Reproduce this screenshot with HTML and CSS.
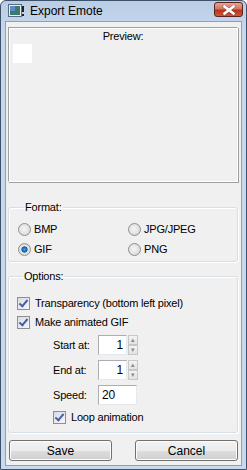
FILE: index.html
```html
<!DOCTYPE html>
<html lang="en">
<head>
    <meta charset="UTF-8">
    <title>Export Emote</title>
    <link rel="stylesheet" href="styles.css">
</head>
<body>
    <div class="window">
        <!-- Title bar -->
        <div class="titlebar">
            <svg class="app-icon" width="16" height="16" viewBox="0 0 16 16">
                <rect x="0.5" y="1.5" width="13" height="12" fill="#e8eef4" stroke="#5a6b80"/>
                <rect x="2" y="3" width="10" height="9" fill="#3d7a6e"/>
                <rect x="2" y="3" width="5" height="5" fill="#5b8fc4"/>
                <rect x="14" y="3" width="2" height="6" fill="#222"/>
                <rect x="14" y="11" width="2" height="2" fill="#222"/>
            </svg>
            <span class="title">Export Emote</span>
            <div class="close-btn">
                <svg width="14" height="10" viewBox="0 0 14 10">
                    <path d="M2.5 1.5 L11.5 8.5 M11.5 1.5 L2.5 8.5" stroke="#4a2a2a" stroke-width="4" stroke-linecap="square" opacity="0.35"/>
                    <path d="M2.5 1.5 L11.5 8.5 M11.5 1.5 L2.5 8.5" stroke="#fff" stroke-width="2.6" stroke-linecap="square"/>
                </svg>
            </div>
        </div>

        <div class="client">
            <div class="preview-box">
                <div class="preview-label">Preview:</div>
                <div class="preview-image"></div>
            </div>

            <fieldset class="group format-group">
                <legend>Format:</legend>
                <div class="radio-grid">
                    <label class="radio"><span class="radio-dot"></span>BMP</label>
                    <label class="radio"><span class="radio-dot"></span>JPG/JPEG</label>
                    <label class="radio"><span class="radio-dot checked"></span>GIF</label>
                    <label class="radio"><span class="radio-dot"></span>PNG</label>
                </div>
            </fieldset>

            <fieldset class="group options-group">
                <legend>Options:</legend>
                <label class="check"><span class="check-box"></span>Transparency (bottom left pixel)</label>
                <label class="check"><span class="check-box"></span>Make animated GIF</label>

                <div class="anim-options">
                    <div class="field-row">
                        <span class="field-label">Start at:</span>
                        <div class="text-input">1</div>
                        <div class="spin">
                            <span class="spin-btn">&#9652;</span>
                            <span class="spin-btn">&#9662;</span>
                        </div>
                    </div>
                    <div class="field-row">
                        <span class="field-label">End at:</span>
                        <div class="text-input">1</div>
                        <div class="spin">
                            <span class="spin-btn">&#9652;</span>
                            <span class="spin-btn">&#9662;</span>
                        </div>
                    </div>
                    <div class="field-row">
                        <span class="field-label">Speed:</span>
                        <div class="text-input speed">20</div>
                    </div>
                    <label class="check loop"><span class="check-box"></span>Loop animation</label>
                </div>
            </fieldset>

            <div class="button-row">
                <button class="btn">Save</button>
                <button class="btn">Cancel</button>
            </div>
        </div>
    </div>
</body>
</html>
```

FILE: styles.css
```css
body {
    margin: 0;
    padding: 0;
    font-family: "Liberation Sans", Arial, sans-serif;
    font-size: 11px;
    letter-spacing: -0.2px;
    color: #000;
    background: #fff;
}

.window {
    width: 247px;
    height: 470px;
    box-sizing: border-box;
    border: 1px solid #3f5269;
    border-radius: 6px 6px 0 0;
    background: linear-gradient(to bottom, #b9cde5, #c5d8ee 30px, #c7d9ee);
    display: flex;
    flex-direction: column;
    padding: 0 4px 3px 4px;
}

.titlebar {
    height: 21px;
    display: flex;
    align-items: center;
    padding-left: 3px;
}

.app-icon {
    margin-right: 6px;
}

.title {
    font-size: 12px;
    letter-spacing: 0;
    color: #000;
    flex: 1;
}

.close-btn {
    width: 27px;
    height: 13px;
    margin-right: -1px;
    margin-top: -3px;
    border: 1px solid #5a2420;
    border-radius: 3px;
    background: linear-gradient(to bottom, #e6a596, #d3755f 45%, #b8341c 55%, #c9583a);
    display: flex;
    align-items: center;
    justify-content: center;
}

.client {
    flex: 1;
    background: #f0f0f0;
    border: 1px solid #8ba1bb;
    padding: 5px 3px 4px 2px;
    display: flex;
    flex-direction: column;
}

.preview-box {
    height: 155px;
    box-sizing: border-box;
    border: 1px solid #a0a0a0;
    border-right-color: #fff;
    border-bottom-color: #fff;
    box-shadow: inset 1px 1px 0 #fff, 1px 1px 0 #a0a0a0;
    margin-bottom: 19px;
}

.preview-label {
    text-align: center;
    line-height: 13px;
    margin-top: 2px;
}

.preview-image {
    width: 19px;
    height: 19px;
    background: #fff;
    margin: 1px 0 0 4px;
}

.group {
    margin: 0;
    border: 1px solid #d5dfe5;
    border-radius: 3px;
    box-shadow: inset 1px 1px 0 #fff, 1px 1px 0 #fff;
    line-height: 13px;
}

.group legend {
    padding: 0 1px;
    margin-left: 6px;
    line-height: 13px;
}

.format-group {
    padding: 9px 0 5px 9px;
    margin-bottom: 8px;
}

.radio-grid {
    display: grid;
    grid-template-columns: 110px 100px;
    row-gap: 7px;
}

.radio {
    display: flex;
    align-items: center;
    gap: 3px;
    height: 13px;
}

.radio-dot {
    width: 13px;
    height: 13px;
    border-radius: 50%;
    border: 1px solid #8e8f8f;
    background: radial-gradient(circle at 45% 45%, #f6f6f6, #dcdcdc 70%, #cfcfcf);
    box-sizing: border-box;
    display: inline-block;
}

.radio-dot.checked {
    background: radial-gradient(circle, #3fa4f0 0, #0a5aa8 2.8px, #e4e4e4 3.4px, #d4d4d4);
}

.options-group {
    padding: 14px 0 8px 8px;
    margin-bottom: 7px;
}

.check {
    display: flex;
    align-items: center;
    gap: 5px;
    height: 13px;
    margin-bottom: 6px;
}

.check-box {
    width: 13px;
    height: 13px;
    box-sizing: border-box;
    border: 1px solid #8e8f8f;
    background: linear-gradient(135deg, #d8dce2, #f6f7f8);
    position: relative;
}

.check-box::after {
    content: "";
    position: absolute;
    left: 3px;
    top: 0px;
    width: 3px;
    height: 7px;
    border: solid #4a5fa8;
    border-width: 0 2px 2px 0;
    transform: rotate(40deg);
}

.anim-options {
    padding-left: 36px;
    display: flex;
    flex-direction: column;
}

.field-row {
    display: flex;
    align-items: center;
    height: 20px;
    margin-bottom: 6px;
}

.field-row + .field-row {
    margin-top: -1px;
}

.field-label {
    width: 45px;
}

.text-input {
    height: 20px;
    box-sizing: border-box;
    border: 1px solid #abadb3;
    border-right-color: #e3e9ef;
    border-bottom-color: #e3e9ef;
    background: #fff;
    width: 29px;
    text-align: right;
    padding: 2px 3px 0 0;
    font-size: 12px;
    line-height: 14px;
}

.text-input.speed {
    width: 39px;
    text-align: left;
    padding-left: 3px;
}

.spin {
    width: 10px;
    height: 20px;
    display: flex;
    flex-direction: column;
    margin-left: 1px;
}

.spin-btn {
    height: 10px;
    box-sizing: border-box;
    border: 1px solid #c8c8c8;
    background: linear-gradient(to bottom, #f4f4f4, #e2e2e2);
    color: #8a8a8a;
    font-size: 7px;
    line-height: 8px;
    text-align: center;
}

.loop {
    margin-bottom: 0;
}

.button-row {
    display: flex;
    justify-content: space-between;
    padding-left: 1px;
}

.btn {
    width: 103px;
    height: 21px;
    font-family: "Liberation Sans", Arial, sans-serif;
    font-size: 12px;
    font-weight: normal;
    color: #000;
    border: 1px solid #707070;
    border-radius: 3px;
    background: linear-gradient(to bottom, #f2f2f2, #ebebeb 50%, #dddddd 51%, #cfcfcf);
    box-shadow: inset 0 0 0 1px #fcfcfc;
    padding: 0;
}
```
